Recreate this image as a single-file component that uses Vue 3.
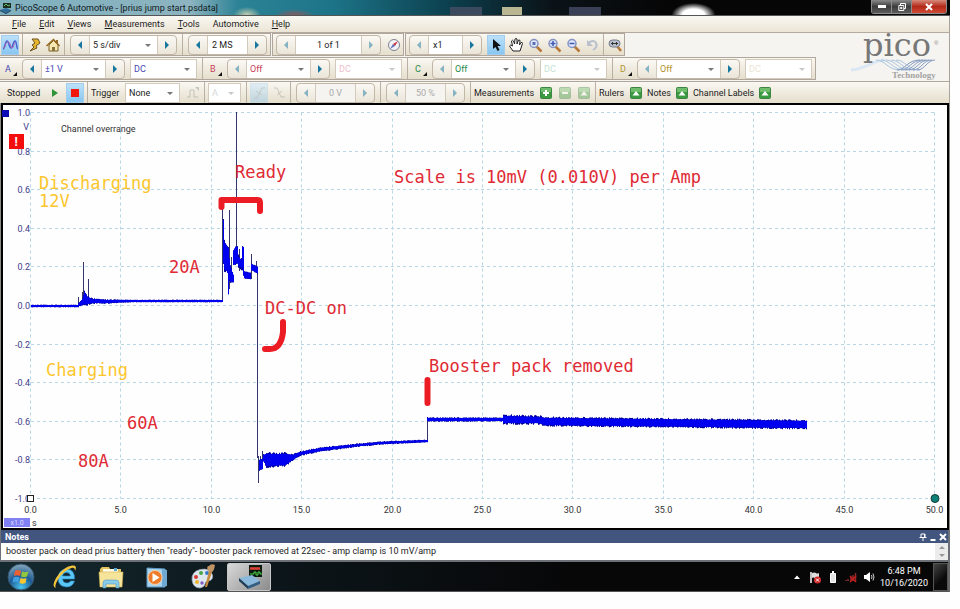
<template>
  <div class="page">
    <div class="window">
      <header class="title-bar">
        <svg class="app-icon" viewBox="0 0 12 12">
          <rect x="3" y="1" width="8" height="5" fill="#1d2b20" />
          <path d="M4 4l2-2 2 2 2-1" stroke="#5fc86a" fill="none" />
          <path d="M0 8l6-2 5 2-5 3z" fill="#2f6d9c" />
          <path d="M0 8v1l6 3 5-3V8l-5 3z" fill="#173a52" />
        </svg>
        <h1>PicoScope 6 Automotive - [prius jump start.psdata]</h1>
        <div class="window-buttons">
          <button class="minimize" aria-label="Minimize"><span></span></button>
          <button class="restore" aria-label="Restore">
            <svg viewBox="0 0 8 8"><path d="M2.5 2V.5h5v5H6M.8 2.5h5v5h-5zM2.6 4.3h1.4v1.3H2.6z" fill="none" stroke="#fff" /></svg>
          </button>
          <button class="close" aria-label="Close">
            <svg viewBox="0 0 8 8"><path d="M1 1l6 6M7 1l-6 6" stroke="#fff" stroke-width="2" /></svg>
          </button>
        </div>
      </header>

      <nav class="menu-bar">
        <button v-for="m in menus" :key="m.text"><u>{{ m.key }}</u>{{ m.text }}</button>
      </nav>

      <div class="toolbars">
        <div
          v-for="(row, r) in toolbars"
          :key="r"
          class="toolbar-row"
          :class="{ full: row.full }"
        >
          <div v-for="(group, g) in row.groups" :key="g" class="tool-group">
            <template v-for="(item, i) in group" :key="i">
              <span v-if="item.type === 'sep'" class="sep"></span>

              <span v-else-if="item.type === 'label'" class="label" :style="{ width: item.w + 'px' }">{{ item.text }}</span>

              <button v-else-if="item.type === 'channel'" class="channel" :class="item.tone">{{ item.text }}</button>

              <button
                v-else-if="item.type === 'icon'"
                class="icon-button"
                :class="{ active: item.active, faint: item.faint }"
                :disabled="item.faint"
                :aria-label="item.name"
                v-html="icons[item.icon]"
              ></button>

              <span
                v-else-if="item.type === 'select'"
                class="drop"
                :class="[item.tone, { faint: item.faint }]"
                :style="{ width: item.w + 'px' }"
              >
                <select :aria-label="item.name" :disabled="item.faint"><option>{{ item.text }}</option></select>
              </span>

              <span
                v-else
                class="stepper"
                :class="[item.tone, { faint: item.faint }]"
                :style="{ width: item.w + 'px' }"
              >
                <button class="prev" :class="{ dim: item.noPrev }" :aria-label="'Previous ' + item.name"></button>
                <span v-if="item.drop" class="drop">
                  <select :aria-label="item.name"><option>{{ item.text }}</option></select>
                </span>
                <input
                  v-else
                  type="text"
                  :aria-label="item.name"
                  :value="item.text"
                  :class="{ centered: item.centered }"
                  :disabled="item.faint"
                />
                <button class="next" :class="{ dim: item.noNext }" :aria-label="'Next ' + item.name"></button>
              </span>
            </template>
          </div>
        </div>
        <svg class="logo" viewBox="0 0 100 48">
          <g fill="none">
            <path d="M4 37c16-1 22-10 34-10" stroke="#dbe8f3" stroke-width="3" />
            <path v-for="n in 5" :key="n" :d="`M${24 + n * 5} 27c9 0 12 10 24 10`" stroke="#a9c4e0" />
            <path v-for="n in 6" :key="'b' + n" :d="`M${46 + n * 4} 37c8 0 10-10 ${24 - n}-10`" stroke="#8299c0" />
          </g>
          <text x="16" y="23" class="logo-name">pico</text>
          <text x="87" y="12" class="logo-mark">®</text>
          <text x="45" y="45" class="logo-sub">Technology</text>
        </svg>
      </div>

      <main class="scope">
        <svg class="chart" viewBox="0 104 950 427">
          <rect x="0" y="104" width="950" height="427" fill="#8d8a85" />
          <rect x="2" y="105" width="946" height="425" fill="#fefefe" stroke="#000" stroke-width="2" />

          <g class="grid">
            <path v-for="x in gridX" :key="'x' + x" :d="`M${x} 113.5V499.5`" />
            <path v-for="y in gridY" :key="'y' + y" :d="`M31 ${y}H935`" />
          </g>

          <g class="y-labels">
            <text v-for="(y, i) in gridY" :key="y" x="30" :y="y + 3">{{ (1 - i * 0.2).toFixed(1) }}</text>
            <text x="29" y="131">V</text>
          </g>
          <g class="x-labels">
            <text v-for="(x, i) in gridX" :key="x" :x="x" y="514">{{ (i * 5).toFixed(1) }}</text>
          </g>

          <path class="spike" :d="spikes" />
          <path class="trace-edge" :d="noise" />
          <path class="trace" :d="body" />

          <rect x="2" y="111" width="7" height="7" fill="#0a0ab4" />
          <rect x="9" y="135" width="15" height="15" fill="#f40d0d" />
          <text x="16" y="147" class="alert">!</text>
          <text x="61" y="133" class="overrange">Channel overrange</text>
          <rect x="27.5" y="496.5" width="6" height="6" fill="#fff" stroke="#222" />
          <circle cx="935" cy="499.5" r="4" fill="#0d8177" stroke="#143b3a" />
          <rect x="4" y="519" width="26" height="9" fill="#8080f2" />
          <text x="17" y="526" class="scale">x1.0</text>
          <text x="32" y="527" class="unit">s</text>

          <g class="marks">
            <path d="M221.5 208v-7H258q2 0 2 3v8" />
            <path d="M283 323v10q-2 17-13 17h-5" />
            <path d="M427.5 381v23" />
          </g>
          <text
            v-for="n in annotations"
            :key="n.text"
            :x="n.x"
            :y="n.y"
            class="annotation"
            :class="{ amber: n.amber }"
          >{{ n.text }}</text>
        </svg>
      </main>

      <section class="notes">
        <div class="notes-title">
          <label for="notes">Notes</label>
          <div class="notes-buttons">
            <button aria-label="Pin"><svg viewBox="0 0 8 8"><path d="M2 1h4v3.5H2zM.5 4.5h7M4 5v3" fill="none" stroke="#fff" /><path d="M5 1h1v3H5z" fill="#fff" /></svg></button>
            <button aria-label="Collapse"><svg viewBox="0 0 8 8"><path d="M1.5 7h5" stroke="#fff" stroke-width="2" /></svg></button>
            <button aria-label="Close notes"><svg viewBox="0 0 8 8"><path d="M1 1l6 6M7 1L1 7" stroke="#fff" stroke-width="2" /></svg></button>
          </div>
        </div>
        <div class="notes-body">
          <textarea id="notes" rows="1" v-model="notes"></textarea>
          <div class="scroll">
            <button aria-label="Scroll up" class="up"></button>
            <button aria-label="Scroll down" class="down"></button>
          </div>
        </div>
      </section>

      <footer class="taskbar">
        <button class="task" aria-label="Start">
          <svg viewBox="0 0 28 28">
            <defs>
              <radialGradient id="orb" cx=".5" cy=".9" r=".9">
                <stop offset="0" stop-color="#49c5ee" />
                <stop offset=".5" stop-color="#1d5c96" />
                <stop offset="1" stop-color="#8aa9bd" />
              </radialGradient>
            </defs>
            <circle cx="14" cy="14" r="13" fill="url(#orb)" stroke="#36536b" />
            <path d="M8 8q3-2 6 0l-1 5q-3-1.500-6 0z" fill="#ea6031" />
            <path d="M15 8.500q3 1.500 6.500 0l-1.500 5q-3 1.500-6 0z" fill="#93c83e" />
            <path d="M6.500 14.500q3-1.500 6 0l-1 5q-3-1.500-6 0z" fill="#3f9fe0" />
            <path d="M13.500 15q3 1.500 6 0l-1 5q-3 1.500-6 0z" fill="#fbc72e" />
          </svg>
        </button>
        <button class="task" aria-label="Internet Explorer">
          <svg viewBox="0 0 28 28">
            <path d="M23.500 16H11.500q.5 4 4.500 4 2.500 0 3.500-2h4q-2 6-8 6-8.500-.5-8.500-9 .5-8.500 8.500-9 8.500.5 8 10zM11.500 13h8q-.5-3.500-4-3.500t-4 3.500z" fill="#5cc6f4" stroke="#2287cb" stroke-width=".6" />
            <path d="M5 25Q0 24 5 15 12 4 21 2.500q6-.5 3 5.500 0-4-3.500-3Q12 8 7 16.500q-4 7-2 8.500z" fill="#f3c33a" />
          </svg>
        </button>
        <button class="task" aria-label="Windows Explorer">
          <svg viewBox="0 0 28 28">
            <path d="M3 6l2-2h7l1 2h11v17H3z" fill="#e2c15e" />
            <path d="M6 6h15v5H6z" fill="#fffbe4" />
            <path d="M17 5h3v3h-3z" fill="#58a7d0" />
            <path d="M2 9h24l-1 15H3z" fill="#f7e49b" stroke="#d5b656" stroke-width=".6" />
            <path d="M6 25v-5q0-3 3-3h10q3 0 3 3v5h-3v-4H9v4z" fill="#8acbe8" stroke="#4c9cc4" stroke-width=".6" />
          </svg>
        </button>
        <button class="task" aria-label="Media Player">
          <svg viewBox="0 0 28 28">
            <path d="M4 5l18 1v18L4 24z" fill="#a9d3ee" stroke="#5c9ac4" />
            <path d="M19 6l5 1v16l-5 1z" fill="#6fa8d2" />
            <circle cx="12" cy="14.500" r="7" fill="#ee7b2a" stroke="#f9d0a0" />
            <path d="M9.500 10l7 4.500-7 4.500z" fill="#fff" />
          </svg>
        </button>
        <button class="task" aria-label="Paint">
          <svg viewBox="0 0 28 28">
            <path d="M3 17Q2 9 11 6.500q10-2 12.500 5.500 1 5-4 6-3 0-3.500 3t-5 4Q4 25 3 17z" fill="#dfe7ee" stroke="#92a2b2" stroke-width=".7" />
            <circle cx="7" cy="14" r="2" fill="#d93b32" />
            <circle cx="12" cy="10" r="2" fill="#49a54a" />
            <circle cx="18" cy="10" r="2" fill="#3678c8" />
            <circle cx="8" cy="19" r="2" fill="#edb52e" />
            <circle cx="13" cy="20" r="1.700" fill="#7f5ac0" />
            <path d="M16 24l4-16 3 1-5 15z" fill="#c78a3d" />
            <path d="M19 8q-2-5 1-5 2-3 6-1-1 6-3 7z" fill="#c09464" />
          </svg>
        </button>
        <button class="task running" aria-label="PicoScope 6 Automotive">
          <svg viewBox="0 0 28 28">
            <path d="M14 2h13v12H14z" fill="#0b1a0c" />
            <path d="M15 7l1-3 1 3 1-3 1 3 1-3 1 3 1-3 1 3 1-3 1 3" stroke="#e04038" fill="none" />
            <path d="M15 11h4V9h2v3h2V9h2v2h2" stroke="#4fd44f" fill="none" />
            <path d="M4 15l13-3 8 6-12 5z" fill="#8ab9dc" />
            <path d="M4 15v3l9 8v-3z" fill="#1f3c56" />
            <path d="M13 23l12-5v3l-12 5z" fill="#345f83" />
          </svg>
        </button>
        <div class="tray">
          <svg viewBox="0 0 12 14"><path d="M3 9h6L6 5.500z" fill="#fff" /></svg>
          <svg viewBox="0 0 12 14">
            <path d="M2 2v11" stroke="#fff" stroke-width="1.500" />
            <path d="M3 3q3-1 4 0t3 0v5q-2 1-4 0T3 8z" fill="#ddd" />
            <circle cx="8.500" cy="10" r="3.500" fill="#d22b2b" />
            <path d="M7 8.500l3 3m0-3l-3 3" stroke="#fff" />
          </svg>
          <svg viewBox="0 0 12 14"><path d="M3.500 3.500h5v9h-5z" fill="#e4e4e4" stroke="#fff" /><path d="M5 2h2" stroke="#fff" stroke-width="2" /></svg>
          <svg viewBox="0 0 12 14">
            <path d="M1 11v-1m2 1V9m3 2V7m2 4V5m2.500 6V3" stroke="#8c2b2b" stroke-width="1.500" />
            <path d="M5 6l6 6m0-6l-6 6" stroke="#c81e1e" stroke-width="1.500" />
          </svg>
          <svg viewBox="0 0 12 14">
            <path d="M1 5h2l4-3v10L3 9H1z" fill="#fff" />
            <path d="M8.500 5q1 2 0 4M10 3.500q2 3.500 0 7" fill="none" stroke="#ccc" />
          </svg>
        </div>
        <time class="clock" datetime="2020-10-16T18:48"><span>6:48 PM</span><span>10/16/2020</span></time>
        <button class="show-desktop" aria-label="Show desktop"></button>
      </footer>
    </div>
  </div>
</template>

<script setup>
import { ref } from 'vue';

const notes = ref('booster pack on dead prius battery then "ready"- booster pack removed at 22sec - amp clamp is 10 mV/amp');

const menus = [
  { key: 'F', text: 'ile' },
  { key: 'E', text: 'dit' },
  { key: 'V', text: 'iews' },
  { key: 'M', text: 'easurements' },
  { key: 'T', text: 'ools' },
  { key: '', text: 'Automotive' },
  { key: 'H', text: 'elp' }
];

const svg = (inner) => `<svg width="16" height="16" viewBox="0 0 16 16" fill="none">${inner}</svg>`;
const lens = (inner) => svg(
  `<path d="M9.500 9.500l5 5" stroke="#b87838" stroke-width="2.500"/><circle cx="7" cy="6.500" r="4" fill="#dfe8f8" stroke="#8492c4" stroke-width="1.500"/>${inner}`
);
const green = (inner) => svg(
  `<rect x="2.500" y="2.500" width="11" height="11" rx="1" fill="#3a9a40" stroke="#3d8544"/><path d="M3 3h10v4H3z" fill="#6fbd6c"/>${inner}`
);

const icons = {
  wave: svg('<path d="M1 12C3 12 3 4 5 4s2 7 4 7 2-7 4-7 1 7 3 8" stroke="#4764cf" stroke-width="1.500"/><path d="M1 11C4 11 3 5 6 5s2 6 4 6 2-6 3-6" stroke="#b364b4"/>'),
  bolt: svg('<path d="M6 2h6l2 4-4 3 1 2-7 3 4-4-2-2 3-2z" fill="#e8b62c" stroke="#6b5320"/>'),
  home: svg('<path d="M4 8v6h9V8L8.500 3.500z" fill="#f6e7b0" stroke="#7a5f25"/><path d="M1.500 9l7-6.500 6 6.500" stroke="#946b22" stroke-width="1.500"/><path d="M7 10h3v4H7z" fill="#8a7140"/><path d="M12 3v3" stroke="#946b22" stroke-width="2"/>'),
  compass: svg('<circle cx="8" cy="8" r="5.500" fill="#f3f4f8" stroke="#7c8093"/><path d="M12 4L9 9 7 7z" fill="#d0313b"/><path d="M4 12l3-5 2 2z" fill="#6171b4"/>'),
  pointer: svg('<path d="M5 2v10l2.500-2 2 4 2-1-2-4H13z" fill="#111"/>'),
  hand: svg('<path d="M5 14L1.500 9q1-2 3 0L3.500 4q1-1.500 2 0L6.500 7l.5-5q1-1 2 0v5l1.500-4q1.500-.5 1.500 1L11.500 8l1.500-2.500q1.500-.5 1.500 1L12 14z" fill="#fff" stroke="#222"/>'),
  zoomRegion: lens('<path d="M5.500 5h3v3h-3z" fill="#5b6eb5"/>'),
  zoomIn: lens('<path d="M4.500 6.500h5M7 4v5" stroke="#4056b5" stroke-width="1.500"/>'),
  zoomOut: lens('<path d="M4.500 6.500h5" stroke="#4056b5" stroke-width="1.500"/>'),
  undo: svg('<path d="M4 6q6-4 8 0t-3 7" stroke="#b9c0cc" stroke-width="2"/><path d="M3 3v6h6z" fill="#b9c0cc"/>'),
  zoomFull: svg('<path d="M10 9l4 5" stroke="#b87838" stroke-width="2.500"/><rect x="2" y="3" width="11" height="7" rx="3.500" fill="#b9c0cd" stroke="#74798a"/><path d="M4 6.500h7M5.500 5v3M9.500 5v3" stroke="#333"/>'),
  play: svg('<path d="M5 4v8l6-4z" fill="#2e9438"/>'),
  stop: svg('<path d="M4 4h8v8H4z" fill="#f3180e"/>'),
  pulse: svg('<path d="M2 12h3V5h4v7h4" stroke="#858b85"/><path d="M10 2h4v4z" fill="#858b85"/>'),
  rising: svg('<path d="M3 13h3l5-10h3M5 6l6 4" stroke="#7f93a4"/>'),
  falling: svg('<path d="M3 3h3l4 9h4M6 10l5-4" stroke="#8d8d88"/>'),
  add: green('<path d="M5 8h6M8 5v6" stroke="#fff" stroke-width="2"/>'),
  remove: green('<path d="M5 8h6" stroke="#fff" stroke-width="2"/>'),
  raise: green('<path d="M4.500 10.500h7L8 6z" fill="#fff"/>')
};

const sep = { type: 'sep' };
const icon = (name, glyph, extra = {}) => ({ type: 'icon', name, icon: glyph, ...extra });
const label = (text, w) => ({ type: 'label', text, w });
const select = (name, text, w, extra = {}) => ({ type: 'select', name, text, w, ...extra });
const stepper = (name, text, w, extra = {}) => ({ type: 'stepper', name, text, w, ...extra });

const channel = (letter, range, tone, on) => [
  { type: 'channel', text: letter, tone },
  stepper(`Channel ${letter} range`, range, 103, { drop: true, tone, noPrev: !on }),
  select(`Channel ${letter} coupling`, 'DC', 67, { tone, faint: !on })
];

const toolbars = [
  {
    groups: [
      [
        icon('Scope mode', 'wave', { active: true }),
        sep,
        icon('Auto setup', 'bolt'),
        icon('Home', 'home'),
        sep,
        stepper('Timebase', '5 s/div', 107, { drop: true }),
        sep,
        stepper('Samples', '2 MS', 79)
      ],
      [
        stepper('Buffer', '1 of 1', 105, { centered: true, noPrev: true, noNext: true }),
        icon('Buffer navigator', 'compass')
      ],
      [
        stepper('Zoom factor', 'x1', 73, { noPrev: true }),
        icon('Selection', 'pointer', { active: true }),
        icon('Hand', 'hand'),
        icon('Marquee zoom', 'zoomRegion'),
        icon('Zoom in', 'zoomIn'),
        icon('Zoom out', 'zoomOut'),
        icon('Undo zoom', 'undo'),
        sep,
        icon('Zoom to full view', 'zoomFull')
      ]
    ]
  },
  {
    groups: [
      [
        ...channel('A', '±1 V', 'blue', true),
        sep,
        ...channel('B', 'Off', 'red', false),
        sep,
        ...channel('C', 'Off', 'green', false),
        sep,
        ...channel('D', 'Off', 'gold', false)
      ]
    ]
  },
  {
    full: true,
    groups: [
      [
        label('Stopped', 43),
        icon('Start', 'play'),
        icon('Stop', 'stop', { active: true }),
        sep,
        label('Trigger', 31),
        select('Trigger mode', 'None', 55),
        icon('Advanced trigger', 'pulse', { faint: true }),
        sep,
        select('Trigger source', 'A', 33, { faint: true }),
        sep,
        icon('Rising edge', 'rising', { faint: true, active: true }),
        icon('Falling edge', 'falling', { faint: true }),
        sep,
        stepper('Threshold', '0 V', 79, { faint: true, centered: true }),
        sep,
        stepper('Pre-trigger', '50 %', 79, { faint: true, centered: true }),
        sep,
        label('Measurements', 61),
        icon('Add measurement', 'add'),
        icon('Delete measurement', 'remove', { faint: true }),
        icon('Edit measurement', 'raise', { faint: true }),
        sep,
        label('Rulers', 26),
        icon('Show rulers', 'raise'),
        label('Notes', 24),
        icon('Show notes', 'raise'),
        label('Channel Labels', 61),
        icon('Show channel labels', 'raise')
      ]
    ]
  }
];

const annotations = [
  { text: 'Ready', x: 235, y: 179 },
  { text: 'Scale is 10mV (0.010V) per Amp', x: 394, y: 184 },
  { text: 'Discharging', x: 39, y: 190, amber: true },
  { text: '12V', x: 39, y: 208, amber: true },
  { text: '20A', x: 169, y: 274 },
  { text: 'DC-DC on', x: 265, y: 315 },
  { text: 'Charging', x: 46, y: 377, amber: true },
  { text: 'Booster pack removed', x: 429, y: 373 },
  { text: '60A', x: 127, y: 430 },
  { text: '80A', x: 78, y: 468 }
];

const gridX = Array.from({ length: 11 }, (_, i) => Math.round(31 + i * 90.4) - 0.5);
const gridY = Array.from({ length: 11 }, (_, i) => Math.round(114 + i * 38.6) - 0.5);

// Envelope of the captured signal: [x, top, bottom, jitter]
const segments = [
  [[31, 306, 308, 0.4], [78, 306, 308, 0.4]],
  [[78, 305, 307, 1], [82, 300, 306, 1], [84, 293, 305, 2], [87, 298, 305, 2], [92, 300, 304, 1], [105, 301, 304, 1], [130, 301, 303, 0.4], [222, 301, 303, 0.4]],
  [[223, 221, 264, 1], [224, 243, 270, 3], [227, 248, 273, 1]],
  [[227, 248, 274, 1], [228, 249, 295, 1]],
  [[229, 260, 281, 1], [230, 267, 283, 1], [233, 276, 283, 1]],
  [[233, 252, 266, 1], [235, 248, 265, 1], [237, 248, 264, 1], [238, 258, 267, 3], [242, 262, 269, 3]],
  [[242, 248, 262, 1], [243, 248, 276, 1]],
  [[244, 273, 279, 1], [250, 274, 280, 1]],
  [[251, 265, 271, 1], [257, 268, 274, 1]],
  [[259, 461, 471, 1], [262, 460, 470, 1]],
  [[263, 456, 462, 1], [266, 455, 467, 2], [285, 455, 466, 2], [292, 456, 461, 1], [300, 453, 456, 1], [320, 449, 452, 1], [350, 446, 448, 1], [380, 443, 445, 1], [427, 441, 443, 0.5]],
  [[427, 419, 422, 1], [502, 419, 422, 0.7]],
  [[503, 417, 424, 2], [538, 418, 424, 2], [545, 419, 426, 1.6], [806, 422, 429, 1.6]]
];

const lines = [
  [78.5, 298, 307], [82.5, 293, 306], [83.5, 263, 306], [88.5, 280, 304],
  [222.5, 210, 302], [223.5, 220, 265], [228.5, 248, 295], [229.5, 211, 290],
  [231.5, 258, 283], [236.5, 113, 265], [239.5, 250, 272], [242.5, 247, 270],
  [251.5, 255, 280], [256.5, 262, 274], [257.5, 268, 459], [258.5, 457, 484],
  [260.5, 457, 471], [262.5, 452, 468], [427.5, 420, 443]
];

let seed = 11;
const random = () => {
  seed = (seed * 1103 + 12345) % 65536;
  return seed / 65536;
};

const plot = (withJitter) => segments.map((points) => {
  let d = '';
  for (let p = 0; p < points.length - 1; p++) {
    const [x1, t1, b1, j1] = points[p];
    const [x2, t2, b2, j2] = points[p + 1];
    for (let x = x1; x <= x2; x++) {
      const k = (x - x1) / (x2 - x1);
      const jitter = withJitter ? j1 + (j2 - j1) * k : 0;
      const top = t1 + (t2 - t1) * k - random() * jitter;
      const bottom = b1 + (b2 - b1) * k + random() * jitter;
      d += `M${x + 0.5} ${top.toFixed(1)}V${bottom.toFixed(1)}`;
    }
  }
  return d;
}).join('');

const body = plot(false);
const noise = plot(true);
const spikes = lines.map(([x, a, b]) => `M${x} ${a}V${b}`).join('');
</script>

<style>
body {
  margin: 0;
  background: #fefefe;
}
</style>

<style scoped>
.page {
  padding: 0 10px 16px 0;
  font-family: Roboto, "Open Sans", sans-serif;
  font-size: 9px;
  line-height: 12px;
  color: #1c1c1c;
}

button,
input,
select,
textarea {
  font: inherit;
  color: inherit;
  border: 0;
  margin: 0;
  padding: 0;
  background: none;
  border-radius: 0;
}

/* Title bar */
.title-bar {
  display: flex;
  align-items: center;
  height: 16px;
  box-sizing: border-box;
  border-bottom: 1px solid #555;
  background:
    radial-gradient(ellipse 14px 8px at 26% 100%, #c8d0b0, transparent),
    radial-gradient(ellipse 20px 6px at 31% 100%, #8a5a60, transparent),
    linear-gradient(#b9b792, #b9b792) 54% 100% / 20px 8px no-repeat,
    linear-gradient(#3c4a60, #3c4a60) 49% 100% / 32px 8px no-repeat,
    linear-gradient(#3a4056, #3a4056) 62% 100% / 32px 8px no-repeat,
    radial-gradient(ellipse 22px 12px at 73% 100%, #fff 50%, transparent),
    linear-gradient(90deg, #7fb0be, #8db4c0 20%, #2d8396 25%, #1d7488 35%, #0c414f 47%, #0b1318 58%, #060606 70%);
}

.app-icon {
  width: 12px;
  height: 12px;
}

h1 {
  flex: 1;
  margin: 0 0 0 3px;
  font-size: 9px;
  font-weight: 400;
  color: #10181c;
}

.window-buttons {
  display: flex;
  align-self: flex-start;
  height: 13px;
  margin-right: 3px;
  border: 1px solid #8c8c8c;
  border-top: 0;
  border-radius: 0 0 3px 3px;
  overflow: hidden;
}

.window-buttons button {
  display: flex;
  align-items: center;
  justify-content: center;
  width: 20px;
  background: linear-gradient(#8a8a8a, #3c3c3c 50%, #5c5c5c);
  border-right: 1px solid #8c8c8c;
}

.window-buttons .close {
  width: 34px;
  border: 0;
  background: linear-gradient(#d68a7c, #b32a18 50%, #cf4a35);
}

.window-buttons svg {
  width: 8px;
  height: 8px;
}

.minimize span {
  width: 8px;
  height: 3px;
  background: #fff;
}

/* Menu */
.menu-bar {
  display: flex;
  box-sizing: border-box;
  height: 17px;
  padding-left: 5px;
  border-bottom: 1px solid #b5aaa0;
  border-right: 1px solid #a8a29a;
  background: linear-gradient(#faf8f2, #ebe5d6);
}

.menu-bar button {
  padding: 0 7px 0 6px;
}

.menu-bar button:first-child {
  padding-left: 7px;
}

/* Toolbars */
.toolbars {
  position: relative;
  border-right: 1px solid #a8a29a;
  background: #f6f4f0;
}

.toolbar-row {
  display: flex;
  gap: 1px;
  padding-bottom: 1px;
}

.toolbar-row.full {
  padding-bottom: 0;
}

.tool-group {
  display: flex;
  align-items: center;
  gap: 3px;
  height: 21px;
  padding: 0 1px;
  border: 1px solid #b1a69b;
  border-left: 0;
  background: linear-gradient(#faf8f2, #e5decc);
}

.tool-group + .tool-group {
  border-left: 1px solid #b1a69b;
}

.full .tool-group {
  flex: 1;
  border-right: 0;
  border-bottom: 0;
}

.sep {
  width: 1px;
  height: 21px;
  background: #b9afa2;
}

.label {
  box-sizing: border-box;
  white-space: nowrap;
}

.full .label:first-child {
  padding-left: 6px;
}

.icon-button {
  display: flex;
  align-items: center;
  justify-content: center;
  width: 16px;
  height: 20px;
}

.icon-button.active {
  width: 18px;
  background: linear-gradient(#bfe3fa, #86c5f0);
  box-shadow: 0 0 0 1px #a2cdec inset;
}

.icon-button.faint {
  opacity: 0.4;
}

.channel {
  position: relative;
  width: 16px;
  height: 20px;
  padding-left: 4px;
  text-align: left;
}

.channel::after {
  content: "";
  position: absolute;
  right: 0;
  bottom: 3px;
  border: 2px solid #111;
  border-top-color: transparent;
  border-left-color: transparent;
}

.stepper {
  display: flex;
  box-sizing: border-box;
  height: 20px;
  margin: 0 2px;
  border: 1px solid #c2b6a6;
  border-radius: 4px;
  background: linear-gradient(#fbf9f5, #ebe5d8);
  overflow: hidden;
}

.prev,
.next {
  display: flex;
  align-items: center;
  justify-content: center;
  flex: 0 0 18px;
}

.prev::before,
.next::before {
  content: "";
  border: 4px solid transparent;
}

.prev::before {
  border-left-width: 0;
  border-right-color: #17779f;
}

.next::before {
  border-right-width: 0;
  border-left-color: #17779f;
}

.dim::before {
  opacity: 0.5;
}

.stepper input {
  flex: 1;
  min-width: 0;
  padding: 0 4px;
  background: #fff;
  border: solid #d4cabc;
  border-width: 0 1px;
}

.stepper .centered {
  text-align: center;
}

.drop {
  position: relative;
  display: flex;
  box-sizing: border-box;
  height: 20px;
  border: 1px solid #d4cabc;
  background: #fff;
}

.stepper .drop {
  flex: 1;
  height: 18px;
  border-width: 0 1px;
}

.tool-group > .drop {
  margin-right: 2px;
}

.drop select {
  flex: 1;
  min-width: 0;
  padding-left: 3px;
  appearance: none;
  opacity: 1;
}

.drop::after {
  content: "";
  position: absolute;
  right: 6px;
  top: calc(50% - 1px);
  border: 3px solid transparent;
  border-top-color: #777;
  border-bottom-width: 0;
  pointer-events: none;
}

.blue { color: #4646b4; }
.red { color: #c84058; }
.green { color: #248a48; }
.gold { color: #b09430; }

.stepper.faint,
.drop.faint {
  color: #999;
}

.stepper.faint input {
  background: #f6f4f0;
  color: #aaa;
}

.stepper.faint button {
  opacity: 0.5;
}

.drop.faint select,
.drop.faint::after {
  opacity: 0.4;
}

.drop.red.faint { color: #d8607a; }
.drop.green.faint { color: #6cb58a; }
.drop.gold.faint { color: #c9bd8a; }

.logo {
  position: absolute;
  right: 2px;
  top: 0;
  width: 100px;
  height: 48px;
}

.logo-name {
  font: 32px "DejaVu Serif", serif;
  fill: #777;
}

.logo-mark {
  font: 6px "Liberation Sans", sans-serif;
  fill: #888;
}

.logo-sub {
  font: bold 9px "Liberation Serif", serif;
  fill: #a3a3a3;
}

/* Chart */
.chart {
  display: block;
  width: 100%;
  height: auto;
}

.grid path {
  stroke: #b6d6e4;
  stroke-dasharray: 3 3;
}

.y-labels {
  fill: #3d3d8c;
  text-anchor: end;
}

.x-labels {
  fill: #333;
  text-anchor: middle;
}

.spike {
  stroke: #35356e;
}

.trace-edge {
  stroke: #0000a0;
}

.trace {
  stroke: #0000f0;
}

.overrange,
.unit {
  fill: #333;
}

.alert {
  font-size: 12px;
  font-weight: 700;
  fill: #fff;
  text-anchor: middle;
}

.scale {
  font-size: 7px;
  fill: #dcdcff;
  text-anchor: middle;
}

.marks path {
  fill: none;
  stroke: #ec1c24;
  stroke-width: 6;
  stroke-linecap: round;
  stroke-linejoin: round;
}

.annotation {
  font: 17px "DejaVu Sans Mono", monospace;
  fill: #e02a34;
}

.annotation.amber {
  fill: #fcc62c;
}

/* Notes */
.notes {
  border: solid #6d7076;
  border-width: 0 2px 2px 1px;
}

.notes-title {
  display: flex;
  align-items: center;
  justify-content: space-between;
  height: 13px;
  padding: 0 1px 0 4px;
  background: #41557f;
  color: #fff;
  font-weight: 700;
}

.notes-buttons {
  display: flex;
  gap: 2px;
}

.notes-buttons button {
  display: flex;
}

.notes-buttons svg {
  width: 8px;
  height: 8px;
}

.notes-body {
  display: flex;
  height: 17px;
  background: #fff;
}

textarea {
  flex: 1;
  height: 12px;
  padding: 2px 5px;
  resize: none;
  overflow: hidden;
}

.scroll {
  display: flex;
  flex-direction: column;
  justify-content: space-around;
  align-items: center;
  width: 13px;
  background: #ececec;
}

.scroll button {
  border: 3px solid transparent;
}

.scroll .up {
  border-top: 0;
  border-bottom-color: #999;
}

.scroll .down {
  border-bottom: 0;
  border-top-color: #999;
}

/* Taskbar */
.taskbar {
  display: flex;
  align-items: center;
  height: 29px;
  border-right: 2px solid #666;
  border-bottom: 1px solid #555;
  background: linear-gradient(90deg, #142a30, #0c1519 30%, #070708 60%);
}

.task {
  display: flex;
  align-items: center;
  justify-content: center;
  width: 44px;
  height: 28px;
  margin-right: 2px;
}

.task:first-child {
  width: 41px;
}

.task svg {
  width: 28px;
  height: 28px;
}

.task.running {
  box-sizing: border-box;
  border: 1px solid #c8c8c8;
  border-radius: 2px;
  background: linear-gradient(135deg, #d8d8d8, #8b8b8b);
}

.tray {
  display: flex;
  gap: 6px;
  margin-left: auto;
}

.tray svg {
  width: 12px;
  height: 14px;
}

.clock {
  display: flex;
  flex-direction: column;
  width: 54px;
  margin: 0 2px;
  text-align: center;
  color: #fff;
}

.show-desktop {
  width: 15px;
  height: 28px;
  border: 1px solid #555;
  background: linear-gradient(135deg, #444, #0a0a0a 60%);
}
</style>
